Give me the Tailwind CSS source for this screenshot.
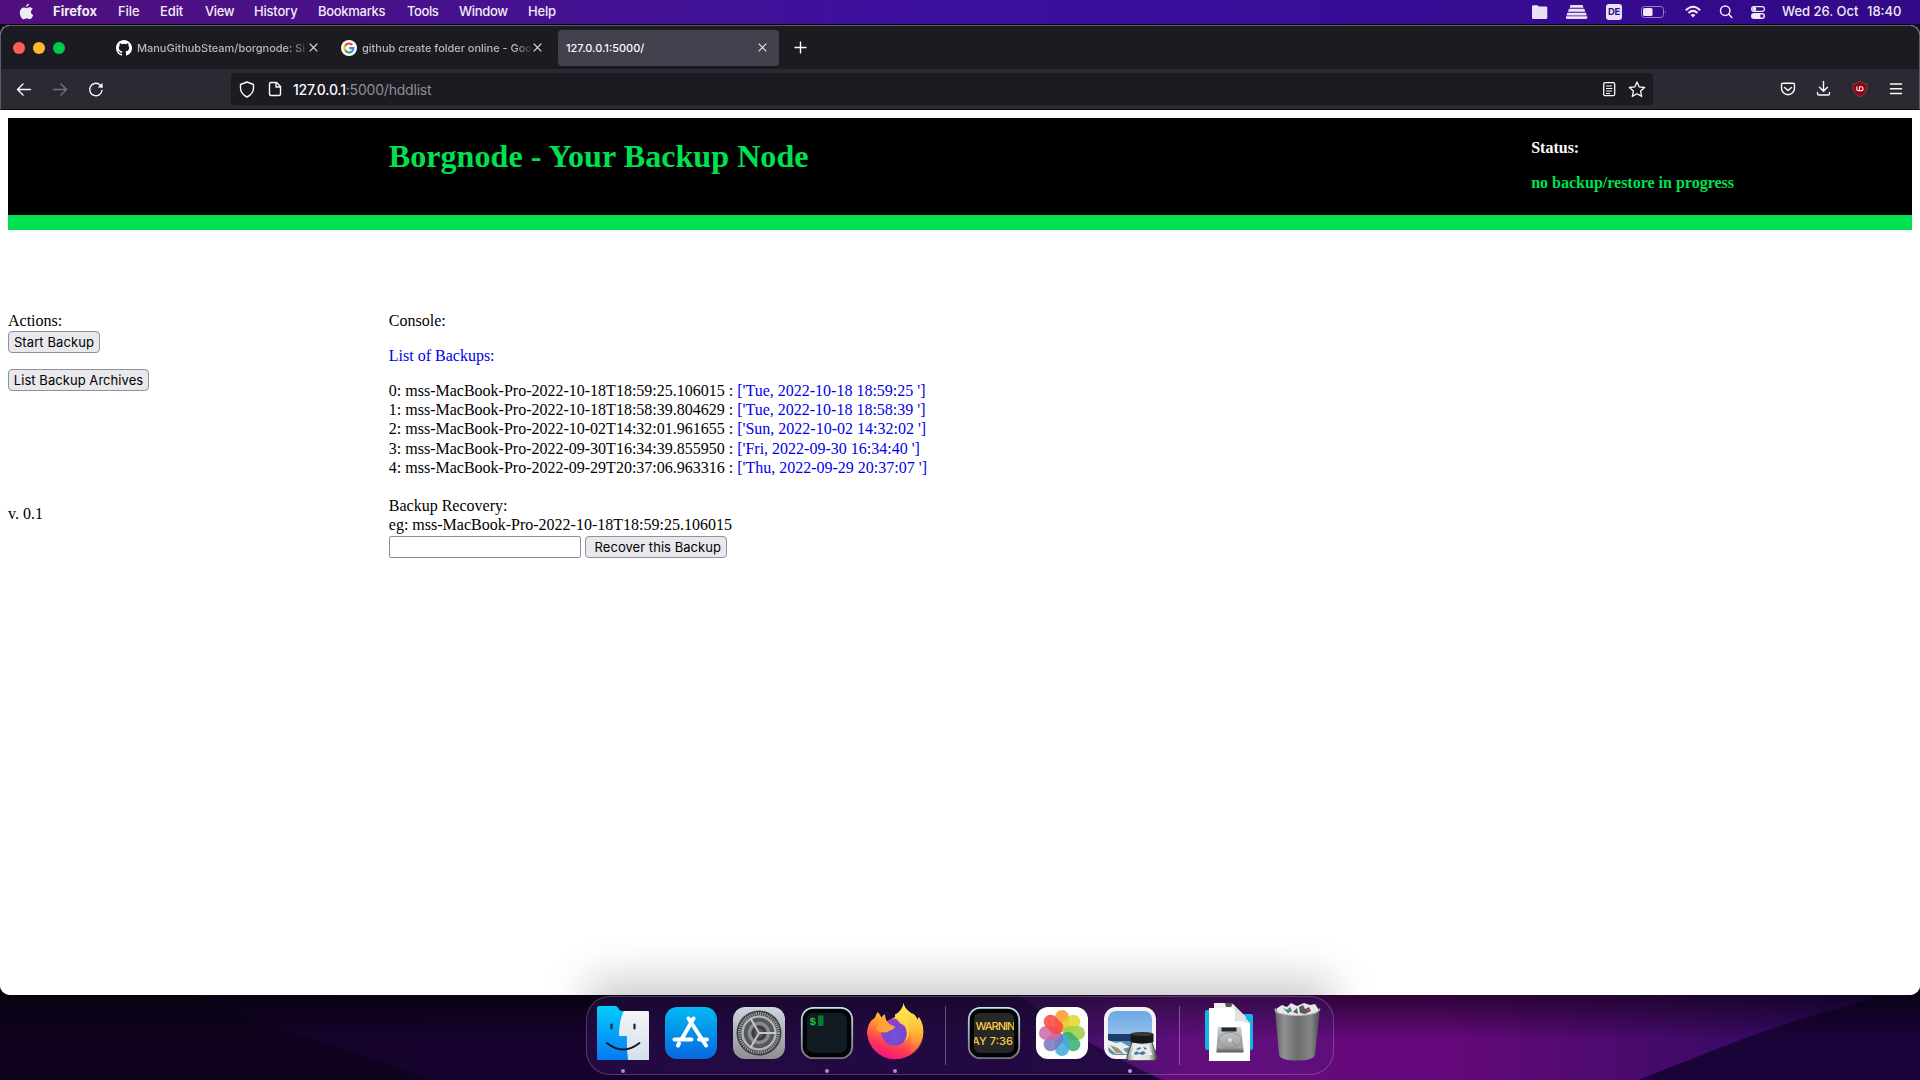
<!DOCTYPE html>
<html lang="en">
<head>
<meta charset="utf-8">
<title>127.0.0.1:5000/</title>
<script src="https://cdn.jsdelivr.net/npm/@tailwindcss/browser@4"></script>
</head>
<body class="relative flex h-[1080px] w-[1920px] flex-col overflow-hidden bg-[#12021f] font-['Inter',sans-serif]">

<!-- wallpaper -->
<svg class="absolute inset-0" width="1920" height="1080" viewBox="0 0 1920 1080">
  <defs>
    <linearGradient id="wl" x1="0" x2="1"><stop offset="0" stop-color="#14042a"/><stop offset=".6" stop-color="#180232"/><stop offset="1" stop-color="#1c0535"/></linearGradient>
    <linearGradient id="wr" x1="0" x2="1"><stop offset="0" stop-color="#2a0a50"/><stop offset=".2" stop-color="#680a7c"/><stop offset=".48" stop-color="#66097c"/><stop offset=".76" stop-color="#400a68"/><stop offset="1" stop-color="#22065a"/></linearGradient>
    <linearGradient id="ws" x1="0" x2="0" y1="0" y2="1"><stop offset="0" stop-color="#000" stop-opacity=".62"/><stop offset="1" stop-color="#000" stop-opacity="0"/></linearGradient>
  </defs>
  <rect y="980" width="1920" height="100" fill="url(#wl)"/>
  <path d="M0 980H165C260 1030 350 1045 428 1080H0Z" fill="#10031f"/>
  <path d="M1000 980C1060 1030 1120 1060 1162 1080H1640L1920 980Z" fill="url(#wr)"/>
  <path d="M1638 1080C1730 1045 1790 1015 1920 990V1080Z" fill="#1a0338"/>
  <rect y="990" width="1920" height="50" fill="url(#ws)"/>
</svg>

<!-- macOS menu bar -->
<header class="relative flex h-6 shrink-0 items-center bg-linear-to-r from-[#500f7d] via-[#3b0fa0] to-[#320987] text-[13px] leading-6 font-medium text-[#f1ebf7]">
  <div class="w-[53px] pl-[19px] pb-px">
    <svg width="15" height="18" viewBox="0 0 15 18" fill="#f1ebf7"><path d="M10 .5c.1 1.700-1.400 3.500-3 3.400C6.900 2.300 8.400.7 10 .5ZM7.500 5.200c.8 0 1.600-.9 3.100-.9 1.300 0 2.400.7 3.100 1.700-2.500 1.500-2.200 5 .6 6.100-.6 1.700-2 4.200-3.500 4.200-1.200 0-1.500-.7-3-.7s-1.900.7-3 .7C3 16.400.8 12.900.8 9.700c0-3.200 2-5.200 4.100-5.200 1.200 0 1.900.7 2.600.7Z"/></svg>
  </div>
  <nav class="flex grow pb-[2px]">
    <span class="w-[65px] font-bold">Firefox</span>
    <span class="w-[42px] tracking-[-.1px]">File</span>
    <span class="w-[45px] tracking-[-.1px]">Edit</span>
    <span class="w-[49px] tracking-[-.4px]">View</span>
    <span class="w-[64px] tracking-[-.2px]">History</span>
    <span class="w-[89px] tracking-[-.3px]">Bookmarks</span>
    <span class="w-[52px] tracking-[-.4px]">Tools</span>
    <span class="w-[69px] tracking-[-.3px]">Window</span>
    <span class="tracking-[-.2px]">Help</span>
  </nav>
  <div class="flex w-[388px] items-center">
    <svg class="w-[34px]" width="34" height="24" viewBox="0 0 34 24" fill="#e9e2f4"><path d="M0 6.500q0-1.300 1.300-1.300h4q.6 0 1 .6l.5.700H14q1.300 0 1.300 1.200v10q0 1.300-1.300 1.300H1.300Q0 19 0 17.700Z"/></svg>
    <svg class="w-10" width="40" height="24" viewBox="0 0 40 24" fill="#e9e2f4"><path d="M4.500 5h12l1 2.800H3.700ZM3 8.700h15.300l1 3.100H2ZM1.300 12.700h18.700l.7 2.700H.6ZM0 16.200h21.300v1.500q0 1.300-1.300 1.300H1.300Q0 19 0 17.700Z"/></svg>
    <div class="mr-[19px] flex h-4 w-4 items-center justify-center rounded-[3px] bg-[#e9e2f4] text-[9.500px] leading-none font-bold tracking-tight text-[#33108a]">DE</div>
    <svg class="w-11" width="44" height="24" viewBox="0 0 44 24" fill="none"><rect x=".5" y="6.500" width="22" height="11" rx="3" stroke="#9482cc"/><rect x="2" y="8" width="9.500" height="8" rx="1.500" fill="#f1ebf7"/><path d="M24 10.200q1.500 1.800 0 3.600Z" fill="#9482cc"/></svg>
    <svg class="w-[34px]" width="34" height="24" viewBox="0 0 34 24" fill="none" stroke="#f1ebf7" stroke-width="2"><path d="M.8 10.300q7.200-7 14.400 0M3.500 13q4.500-4.300 9 0"/><path d="M8 17.500 5.600 15q2.400-2.100 4.800 0Z" fill="#f1ebf7" stroke="none"/></svg>
    <svg class="w-8" width="32" height="24" viewBox="0 0 32 24" fill="none" stroke="#f1ebf7" stroke-width="1.500" stroke-linecap="round"><circle cx="6.200" cy="10.700" r="4.700"/><path d="m9.700 14.300 3.200 3.200"/></svg>
    <svg class="w-[31px]" width="31" height="24" viewBox="0 0 31 24"><rect x=".6" y="6.600" width="12.800" height="4.800" rx="2.400" fill="none" stroke="#f1ebf7" stroke-width="1.200"/><circle cx="3.300" cy="9" r="2" fill="#f1ebf7"/><rect y="13" width="14" height="6" rx="3" fill="#f1ebf7"/><circle cx="10.800" cy="16" r="1.800" fill="#4520a0"/></svg>
    <span class="w-[85px] whitespace-nowrap pb-[2px]">Wed 26. Oct</span>
    <span class="pb-[2px]">18:40</span>
  </div>
</header>

<!-- browser window -->
<main class="relative flex h-[971px] shrink-0 flex-col overflow-hidden rounded-[10px] border-t border-black bg-white">
  <!-- tab strip -->
  <div class="flex h-11 shrink-0 items-center rounded-t-[10px] border-x border-t border-[#5d5c62] bg-[#1c1b22] text-[11px] text-[#b9b8bd]">
    <div class="flex w-[115px] gap-2 pl-3">
      <i class="h-3 w-3 rounded-full bg-[#ff5d57]"></i><i class="h-3 w-3 rounded-full bg-[#ffb92f]"></i><i class="h-3 w-3 rounded-full bg-[#00ca4e]"></i>
    </div>
    <svg width="16" height="16" viewBox="0 0 16 16" fill="#fff"><path d="M8 0C3.580 0 0 3.580 0 8c0 3.540 2.290 6.530 5.470 7.590.4.070.55-.17.55-.38v-1.490c-2.230.48-2.700-.94-2.700-.94-.36-.92-.89-1.170-.89-1.170-.73-.5.060-.49.060-.49.8.060 1.230.83 1.230.83.71 1.220 1.870.87 2.330.66.070-.52.280-.87.510-1.070-1.780-.2-3.640-.89-3.640-3.950 0-.87.310-1.590.82-2.150-.08-.2-.36-1.020.080-2.120 0 0 .67-.21 2.200.82a7.600 7.600 0 0 1 4 0c1.530-1.040 2.200-.82 2.200-.82.44 1.100.16 1.920.080 2.120.51.560.82 1.270.82 2.150 0 3.070-1.870 3.750-3.650 3.950.29.250.54.730.54 1.480v2.200c0 .21.150.46.550.38A8 8 0 0 0 8 0Z"/></svg>
    <span class="ml-[5px] w-[172px] pt-[2px] whitespace-nowrap mask-r-from-90% mask-r-to-100% font-medium tracking-[-.02px]">ManuGithubSteam/borgnode: Si</span>
    <svg class="mb-px" width="9" height="9" viewBox="0 0 9 9" stroke="#e8e8ec" stroke-width="1.100"><path d="m.7.700 7.600 7.600M8.300.700.7 8.300"/></svg>
    <svg class="ml-[23px]" width="16" height="16" viewBox="0 0 16 16" fill="none" stroke-width="2.200"><circle cx="8" cy="8" r="8" fill="#fff"/><path d="M11.300 4.900A4.500 4.500 0 0 0 4.100 5.800" stroke="#ea4335"/><path d="M4.100 5.800a4.500 4.500 0 0 0 0 4.500" stroke="#fbbc05"/><path d="M4.100 10.300a4.500 4.500 0 0 0 6.900 1.100" stroke="#34a853"/><path d="M11 11.400A4.400 4.400 0 0 0 12.400 8.100H8.200" stroke="#4285f4"/></svg>
    <span class="ml-[5px] w-[171px] pt-[2px] whitespace-nowrap mask-r-from-90% mask-r-to-100% font-medium tracking-[-.02px]">github create folder online - Goo</span>
    <svg class="mb-px" width="9" height="9" viewBox="0 0 9 9" stroke="#e8e8ec" stroke-width="1.100"><path d="m.7.700 7.600 7.600M8.300.700.7 8.300"/></svg>
    <div class="ml-4 flex h-9 w-[221px] items-center justify-between rounded bg-[#42414d] pr-3 pl-2 font-medium text-[#fbfbfe]">
      <span class="pt-[2px]">127.0.0.1:5000/</span>
      <svg class="mb-px" width="9" height="9" viewBox="0 0 9 9" stroke="#e8e8ec" stroke-width="1.100"><path d="m.7.700 7.600 7.600M8.300.700.7 8.300"/></svg>
    </div>
    <svg class="ml-[15px]" width="13" height="13" viewBox="0 0 13 13" stroke="#fbfbfe" stroke-width="1.400"><path d="M6.500.5v12M.5 6.500h12"/></svg>
  </div>
  <!-- navigation toolbar -->
  <div class="flex h-[41px] shrink-0 items-center border-x border-b border-x-[#5d5c62] border-b-[#0c0c10] bg-[#2b2a33]">
    <svg width="230" height="40" viewBox="1 0 230 40" fill="none" stroke="#fbfbfe" stroke-width="1.400" stroke-linecap="round" stroke-linejoin="round"><path d="M30.500 20.500H17.500M23 15l-5.500 5.500L23 26"/><path stroke="#73727a" d="M53.500 20.500h13M61 15l5.500 5.500L61 26"/><path d="M102 21.500A6.200 6.200 0 1 1 99.500 15.500L102 18"/><path d="M102.500 13.800v4.700H97.800Z" fill="#fbfbfe" stroke="none"/></svg>
    <div class="flex h-8 w-[1422px] items-center rounded bg-[#1c1b22]">
      <svg width="62" height="32" viewBox="0 0 62 32" fill="none" stroke="#fbfbfe" stroke-width="1.400" stroke-linejoin="round"><path d="M16 9 22.500 11.500V15c0 3.500-2.500 7-6.500 9-4-2-6.500-5.500-6.500-9v-3.500Z"/><path d="M38.500 11q0-1.500 1.500-1.500h5.500l4 4V21q0 1.500-1.500 1.500h-8q-1.500 0-1.500-1.500Z"/><path d="M45 9.500V14h4.500"/></svg>
      <div class="grow pt-px text-[14px] tracking-[-.2px] text-[#8f8e96]"><span class="font-medium text-[#fbfbfe]">127.0.0.1</span>:5000/hddlist</div>
      <svg width="50" height="32" viewBox="0 0 50 32" fill="none" stroke="#fbfbfe" stroke-width="1.300" stroke-linejoin="round"><rect x=".7" y="9.700" width="11" height="13" rx="1.500"/><path d="M3 13h6M3 15.500h6.500M3 18h6M3 20.500h4" stroke-width="1.100"/><path d="m34 9 2.200 4.900 5.400.6-4 3.600 1.100 5.300-4.700-2.700-4.700 2.700 1.100-5.300-4-3.600 5.400-.6Z"/></svg>
    </div>
    <svg class="ml-[127px]" width="130" height="40" viewBox="1780 0 130 40" fill="none" stroke="#fbfbfe" stroke-width="1.400" stroke-linecap="round" stroke-linejoin="round"><path d="M1783 14.200h10q1.500 0 1.500 1.500v3.500a6.500 6.500 0 0 1-13 0v-3.500q0-1.500 1.500-1.500ZM1784.500 18.500l3.500 3 3.500-3"/><path d="M1823.500 12.500v9.500m-4-3.800 4 4 4-4M1817.500 23.500v1q0 1.500 1.500 1.500h9q1.500 0 1.500-1.500v-1"/><path d="M1860 12.500q3.500 2.500 7 2.300c.6 5.500-1 10-7 13-6-3-7.600-7.500-7-13q3.500.2 7-2.300Z" fill="#980012" stroke="#6a4a52" stroke-width="1"/><path d="M1856.800 17.800v2.500q0 1.500 1.600 1.500h1v-4m0 0v4h1.600q2 0 2-2t-2-2Z" stroke-width="1.100"/><path d="M1890.500 15h11M1890.500 19.800h11M1890.500 24.600h11" stroke-width="1.500"/></svg>
  </div>

  <!-- page -->
  <div class="flex grow flex-col bg-white p-2 font-['Liberation_Serif',serif] text-[16px] leading-[19.200px] text-black">
    <div class="grid h-28 shrink-0 grid-cols-5 border-b-[15px] border-[#00e050] bg-black font-bold text-[#00e050]">
      <h1 class="col-span-3 col-start-2 pt-5 text-[32px] leading-[37px] tracking-[.07px]">Borgnode - Your Backup Node</h1>
      <div class="pt-5">
        <p class="text-white">Status:</p>
        <p class="mt-4">no backup/restore in progress</p>
      </div>
    </div>
    <div class="mt-[81px] grid grid-cols-5">
      <div class="flex flex-col items-start">
        <p>Actions:</p>
        <button class="mt-px h-[22px] w-[92px] rounded-[4px] border border-[#8f8f9d] bg-[#e9e9ed] font-['Inter',sans-serif] text-[13px] leading-5 tracking-[.1px] whitespace-nowrap">Start Backup</button>
        <button class="mt-4 h-[22px] w-[141px] rounded-[4px] border border-[#8f8f9d] bg-[#e9e9ed] font-['Inter',sans-serif] text-[13px] leading-5 tracking-[.05px] whitespace-nowrap">List Backup Archives</button>
        <p class="mt-[113px]">v. 0.1</p>
      </div>
      <div class="col-span-4">
        <p>Console:</p>
        <p class="mt-4 text-[#0000e8]">List of Backups:</p>
        <ul class="mt-[15.600px]">
          <li>0: mss-MacBook-Pro-2022-10-18T18:59:25.106015 : <span class="text-[#0000e8]">['Tue, 2022-10-18 18:59:25 ']</span></li>
          <li>1: mss-MacBook-Pro-2022-10-18T18:58:39.804629 : <span class="text-[#0000e8]">['Tue, 2022-10-18 18:58:39 ']</span></li>
          <li>2: mss-MacBook-Pro-2022-10-02T14:32:01.961655 : <span class="text-[#0000e8]">['Sun, 2022-10-02 14:32:02 ']</span></li>
          <li>3: mss-MacBook-Pro-2022-09-30T16:34:39.855950 : <span class="text-[#0000e8]">['Fri, 2022-09-30 16:34:40 ']</span></li>
          <li>4: mss-MacBook-Pro-2022-09-29T20:37:06.963316 : <span class="text-[#0000e8]">['Thu, 2022-09-29 20:37:07 ']</span></li>
        </ul>
        <p class="mt-[19px]">Backup Recovery:</p>
        <p>eg: mss-MacBook-Pro-2022-10-18T18:59:25.106015</p>
        <div class="mt-[1.600px] flex gap-1">
          <input class="h-[22px] w-48 rounded-[2px] border border-[#8f8f9d] bg-white">
          <button class="h-[22px] w-[142px] rounded-[4px] border border-[#8f8f9d] bg-[#e9e9ed] pl-1 font-['Inter',sans-serif] text-[13px] leading-5 tracking-[.05px] whitespace-nowrap">Recover this Backup</button>
        </div>
      </div>
    </div>
  </div>
  <!-- shadow cast by the dock -->
  <div class="absolute -bottom-12 left-[606px] h-11 w-[708px] shadow-[0_0_45px_18px_rgba(0,0,0,.22)]"></div>
</main>

<!-- dock -->
<footer class="relative mt-px ml-[586px] flex h-[79px] w-[748px] shrink-0 rounded-[24px] border border-white/20 bg-[#46207a]/25 px-0.5 pt-1.5 *:shrink-0">
  <svg width="68" height="70" viewBox="0 0 68 70"><defs><linearGradient id="fb" x2="0" y2="1"><stop stop-color="#03cdfb"/><stop offset="1" stop-color="#0878f2"/></linearGradient><linearGradient id="fw" x2="0" y2="1"><stop stop-color="#f6f4f6"/><stop offset="1" stop-color="#d3dfeb"/></linearGradient></defs>
    <path d="M8 5q0-2 2-2h16c4 0 3 5 7 5h27v49H8Z" fill="url(#fb)"/><path d="M35 8h23q2 0 2 2v47H39q-1.500-12-1-24h-8Q30 17 35 8Z" fill="url(#fw)"/><path d="M22.500 21.500v4M45.500 21.500v4" stroke="#122437" stroke-width="2.200" stroke-linecap="round"/><path d="M18 40q16 13 32.500 0" fill="none" stroke="#10151f" stroke-width="1.800" stroke-linecap="round"/><circle cx="34" cy="68" r="2" fill="#b18ac9"/></svg>
  <svg width="68" height="70" viewBox="0 0 68 70"><defs><linearGradient id="as" x2="0" y2="1"><stop stop-color="#03b9f2"/><stop offset="1" stop-color="#0768e0"/></linearGradient></defs>
    <rect x="8" y="4" width="52" height="52" rx="12" fill="url(#as)"/><path d="M36.500 15.500 24.500 36.500M22 40.500l-1 2M31.500 15.500 49 42.500M17.500 36.500h17M42 36.500h8" stroke="#fff" stroke-width="4" stroke-linecap="round" fill="none"/></svg>
  <svg width="68" height="70" viewBox="0 0 68 70"><defs><linearGradient id="sg" x2="0" y2="1"><stop stop-color="#ccd6de"/><stop offset="1" stop-color="#908f91"/></linearGradient></defs>
    <rect x="8" y="4" width="52" height="52" rx="12" fill="url(#sg)"/><circle cx="34" cy="30" r="22.500" fill="#3b3c3f"/><circle cx="34" cy="30" r="19.500" fill="none" stroke="#a0a2a5" stroke-width="3" stroke-dasharray="1.200 1"/><circle cx="34" cy="30" r="16.500" fill="#56585b" stroke="#b1b4b7" stroke-width="2.500"/><circle cx="34" cy="30" r="9.500" fill="#3d3e42" stroke="#898b8e" stroke-width="3.500"/><circle cx="34" cy="30" r="4.500" fill="#55575a"/><path d="M34 30h17M34 30 25.500 15.300M34 30l-8.500 14.700" stroke="#c6c8ca" stroke-width="2"/></svg>
  <svg width="68" height="70" viewBox="0 0 68 70"><defs><linearGradient id="tb" x2="0" y2="1"><stop stop-color="#c4e4e8"/><stop offset="1" stop-color="#77777b"/></linearGradient></defs>
    <rect x="8.800" y="4.800" width="50.400" height="50.400" rx="11.500" fill="#020404" stroke="url(#tb)" stroke-width="1.800"/><rect x="14" y="10" width="40" height="40" rx="7" fill="#101c22"/><text x="16.500" y="22" font-family="Liberation Mono" font-size="11" font-weight="bold" fill="#17ca48">$</text><rect x="25" y="12.500" width="5.500" height="10.500" fill="#087b2b"/><circle cx="34" cy="68" r="2" fill="#b18ac9"/></svg>
  <svg class="overflow-visible" width="68" height="70" viewBox="0 0 68 70"><defs><linearGradient id="fo" x1=".8" y1="0" x2=".35" y2="1"><stop stop-color="#ffe64a"/><stop offset=".4" stop-color="#ff9a2d"/><stop offset=".72" stop-color="#ff4050"/><stop offset="1" stop-color="#f51184"/></linearGradient><radialGradient id="fp" cx=".5" cy=".6" r=".65"><stop stop-color="#6a55e0"/><stop offset=".5" stop-color="#7849cf"/><stop offset="1" stop-color="#a53bd6"/></radialGradient><linearGradient id="fy" x2="0" y2="1"><stop stop-color="#fff058"/><stop offset=".45" stop-color="#ffc53a"/><stop offset="1" stop-color="#ff7a3a" stop-opacity="0"/></linearGradient></defs>
    <path d="M16.700 9Q19 11 20.500 14.500 22 12 24 11q0 4 2 7.500L34 14l18-3.500q3 2 4.500 6l1.500-2.500Q62.300 20 62.300 29.500A28.200 28.200 0 0 1 6 30Q6 20 14 14.500 15 11 16.700 9Z" fill="url(#fo)"/>
    <path d="M42.700-.3C43 5 48 8 52 11.500q3.500 3 4.500 6.500l1-3.500q4.800 6 4.800 14.500c0 12-6 21-15 25Q51 46 50 32L46 19 34 15.500v-4Q41 8 42.700-.3Z" fill="url(#fy)"/>
    <circle cx="33.700" cy="29.300" r="13.500" fill="url(#fp)"/>
    <path d="M15 26q3-7 11-8 2 4 8 5.500-.5 2.500-6 4.500-2 1.500-4 1.500-2 0-3.500-.5Q17 29 15 26Z" fill="#ffa23a"/>
    <path d="M34 13.500q5 0 8 5l5 3.500q2 5 .5 11-1.500 4-5 7 5-7 2.500-14-1-4-5.500-5.500Q36 16.500 34 15Z" fill="#ffd046"/><path d="M34 11.500q2 3.500 7.500 6l6 5.500q-.5-4-3-6.500l3 .5q-5-6-13.500-5.500Z" fill="#ffdf4a"/><circle cx="34" cy="68" r="2" fill="#b18ac9"/></svg>
  <div class="w-[31px] pt-[3px] pl-4"><div class="h-[59px] w-px bg-white/30"></div></div>
  <svg width="68" height="70" viewBox="0 0 68 70"><defs><clipPath id="cc"><rect x="14" y="10" width="40" height="40" rx="6"/></clipPath></defs>
    <rect x="8.800" y="4.800" width="50.400" height="50.400" rx="11.500" fill="#020303" stroke="url(#tb)" stroke-width="1.800"/><rect x="14" y="10" width="40" height="40" rx="6" fill="#272727"/><g clip-path="url(#cc)" font-family="Inter" font-size="11" font-weight="500" fill="#f5cd43"><text x="15.500" y="26.500" textLength="47">WARNING</text><text x="12" y="41.500" textLength="41">AY 7:36</text></g></svg>
  <svg width="68" height="70" viewBox="0 0 68 70"><rect x="8" y="4" width="52" height="52" rx="12" fill="#fdfdfd"/>
    <g transform="translate(34 30)" fill-opacity=".86"><rect x="-7" y="-23" width="14" height="22" rx="7" fill="#fa9a28"/><rect x="-7" y="-23" width="14" height="22" rx="7" fill="#e3d52f" transform="rotate(45)"/><rect x="-7" y="-23" width="14" height="22" rx="7" fill="#9bce45" transform="rotate(90)"/><rect x="-7" y="-23" width="14" height="22" rx="7" fill="#35af70" transform="rotate(135)"/><rect x="-7" y="-23" width="14" height="22" rx="7" fill="#43a9df" transform="rotate(180)"/><rect x="-7" y="-23" width="14" height="22" rx="7" fill="#7b75bd" transform="rotate(225)"/><rect x="-7" y="-23" width="14" height="22" rx="7" fill="#cf6aa5" transform="rotate(270)"/><rect x="-7" y="-23" width="14" height="22" rx="7" fill="#f94840" transform="rotate(315)"/></g></svg>
  <svg width="68" height="70" viewBox="0 0 68 70"><defs><linearGradient id="sk" x2="0" y2="1"><stop stop-color="#6ca8e8"/><stop offset="1" stop-color="#b6d2ee"/></linearGradient><linearGradient id="gl"><stop stop-color="#888"/><stop offset=".25" stop-color="#eee"/><stop offset=".75" stop-color="#ddd"/><stop offset="1" stop-color="#555"/></linearGradient></defs>
    <rect x="8" y="4" width="52" height="52" rx="12" fill="#f4f1f3"/><rect x="12" y="8" width="44" height="44" rx="8" fill="url(#sk)"/><path d="M12 31h44v9H12Z" fill="#1c3c6c"/><path d="M12 38h44v8q0 6-6 6H20q-8 0-8-8Z" fill="#5b8fb0"/><path d="M12 37l8 3 5-1 9 5-7 2 5 5H20l-8-7ZM38 42l12 1-4 8H32Z" fill="#e8edf0"/><path d="M14 42l8 3 6 6-8-1Z" fill="#a49275"/><path d="M36 39h20l4.500 15q.5 3-3 3.500H34q-4-.5-3-3.500Z" fill="url(#gl)" stroke="#4e4e50"/><path d="M39 43h14l3.500 9h-22Z" fill="#e8edee"/><path d="m40 46 4-2 1 2-3 1ZM47 44l4 1-2 2ZM38 50l3-2 2 2 4-2 3 2-3 2-4-1-4 1Z" fill="#4a7b96"/><path d="M34.500 31q11.500-3.500 23 0v8q-11.500 3.500-23 0Z" fill="#17181a"/><ellipse cx="46" cy="31" rx="11.300" ry="2" fill="#37383b"/><circle cx="34" cy="68" r="2" fill="#ce92ea"/></svg>
  <div class="w-[31px] pt-[3px] pl-[15px]"><div class="h-[59px] w-px bg-white/30"></div></div>
  <svg width="68" height="70" viewBox="0 0 68 70"><defs><linearGradient id="hd" x2="0" y2="1"><stop stop-color="#c9cdcf"/><stop offset=".8" stop-color="#a0a3a5"/><stop offset="1" stop-color="#555"/></linearGradient></defs>
    <path d="M10 9q0-2 2-2h10l3 4h31q2 0 2 2v32q0 2-2 2H12q-2 0-2-2Z" fill="#13b5e8"/><path d="M19 0h18l14 14v33H19Z" fill="#eee"/><path d="M30 0h8l-2 4h-5Z" fill="#555"/><path d="M14 5h26l15 15v38H14Z" fill="#fff"/><path d="M40 5q2 6 0 13 7-2 15 2Z" fill="#e4e4e4" stroke="#bbb" stroke-width=".5"/><path d="M23 24h23l2.500 22v3.500H21.500V46Z" fill="url(#hd)"/><path d="M26.500 24.500h15v4h-15Z" fill="#27292b"/><ellipse cx="35" cy="37" rx="11.500" ry="7.500" fill="none" stroke="#8a8d8f" stroke-width=".8"/><circle cx="35" cy="37" r="2" fill="#dcdedf"/><path d="M37 38l5 6" stroke="#878a8c"/></svg>
  <svg width="68" height="70" viewBox="0 0 68 70"><defs><linearGradient id="tr"><stop stop-color="#5d5e60"/><stop offset=".2" stop-color="#919294"/><stop offset=".5" stop-color="#6c6d6f"/><stop offset=".8" stop-color="#858688"/><stop offset="1" stop-color="#47484a"/></linearGradient></defs>
    <path d="M13 6 19 2l5 2 4-4 6 3 7-3 6 2 5-1 4 6-3 6-19 2-18-3Z" fill="#e8e8e8"/><path d="m20 5 4 2 3-3 2 4-4 2ZM36 4l4-2 2 4 4-2 2 4-6 3-5-1ZM30 9l4-4 1 6Z" fill="#555c60"/><path d="m23 7 4-1.500 1 3Z" fill="#2cadcb"/><path d="m42 7 4-1.500 1 3Z" fill="#d84235"/><path d="M12 5.500q0 3 5 5 17 4 34 0 5-2 6-5l-5 46q-1 6-18 6t-18-6Z" fill="url(#tr)"/><path d="M12 5.500q0 4 5 5 17 4 34 0 5-2 6-5" fill="none" stroke="#b7b8b9" stroke-width="1.200"/></svg>
</footer>
</body>
</html>
